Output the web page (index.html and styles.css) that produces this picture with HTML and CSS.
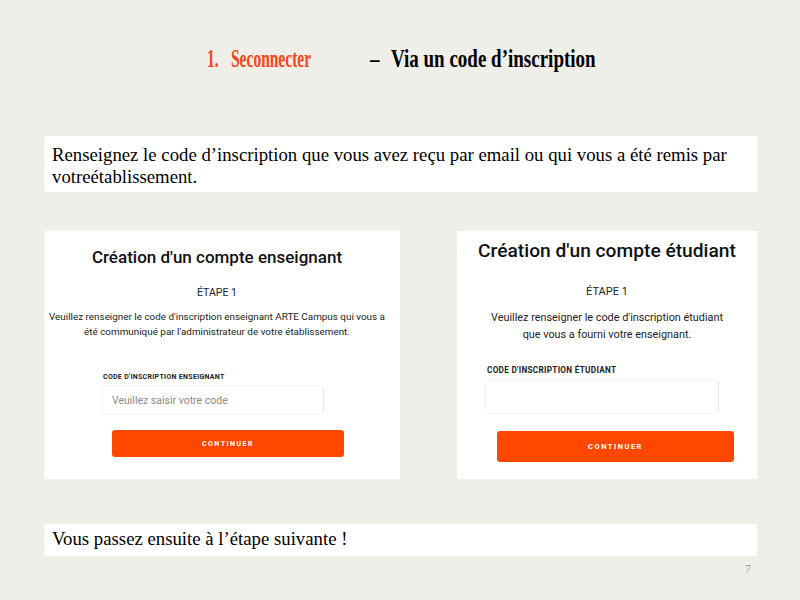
FILE: index.html
```html
<!DOCTYPE html>
<html lang="fr">
<head>
  <meta charset="UTF-8" />
  <meta name="viewport" content="width=device-width, initial-scale=1" />
  <title>Se connecter - Via un code d'inscription</title>
  <link rel="stylesheet" href="styles.css">
</head>
<body>

  <div class="slide">

    <!-- Titre de la diapositive -->
    <h1 class="slide-title">
      <span class="t-num"><span class="squeeze-a">1.</span></span>
      <span class="t-orange"><span class="squeeze-a">Seconnecter</span></span>
      <span class="t-dash"><span class="squeeze-b">–</span></span>
      <span class="t-black"><span class="squeeze-b">Via un code d’inscription</span></span>
    </h1>

    <div class="note note-top">
      Renseignez le code d’inscription que vous avez reçu par email ou qui vous a été remis par
      votreétablissement.
    </div>

    <!-- Captures des deux formulaires -->
    <div class="cards">

      <div class="card card-teacher">
        <h2>Création d'un compte enseignant</h2>
        <div class="step">ÉTAPE 1</div>
        <p>Veuillez renseigner le code d'inscription enseignant ARTE Campus qui vous a<br>
          été communiqué par l'administrateur de votre établissement.</p>
        <label for="codeTeacher">CODE D'INSCRIPTION ENSEIGNANT</label>
        <input type="text" id="codeTeacher" placeholder="Veuillez saisir votre code" />
        <button type="button">CONTINUER</button>
      </div>

      <div class="card card-student">
        <h2>Création d'un compte étudiant</h2>
        <div class="step">ÉTAPE 1</div>
        <p>Veuillez renseigner le code d'inscription étudiant<br>que vous a fourni votre enseignant.</p>
        <label for="codeStudent">CODE D'INSCRIPTION ÉTUDIANT</label>
        <input type="text" id="codeStudent" />
        <button type="button">CONTINUER</button>
      </div>

    </div>

    <div class="note note-bottom">Vous passez ensuite à l’étape suivante !</div>

    <div class="page-num">7</div>
  </div>

</body>
</html>
```

FILE: styles.css
```css
body {
  margin: 0;
  background: #efeee9;
  font-family: "Liberation Serif", "Times New Roman", serif;
  color: #000;
}

.slide {
  width: 800px;
  height: 600px;
  padding: 0 43px 0 44px;
  box-sizing: border-box;
}

/* titre */
.slide-title {
  display: flex;
  align-items: baseline;
  margin: 0;
  padding: 44px 0 0 163px;
  height: 136px;
  box-sizing: border-box;
  font-size: 25px;
  line-height: 30px;
  font-weight: bold;
  white-space: nowrap;
}

.squeeze-a,
.squeeze-b {
  display: inline-block;
  transform-origin: left center;
}

.squeeze-a {
  transform: scaleX(0.62);
}

.squeeze-b {
  transform: scaleX(0.76);
}

.t-num {
  width: 24px;
  color: #f5461a;
}

.t-orange {
  width: 139px;
  color: #f5461a;
}

.t-dash {
  width: 21px;
}

.note {
  background: #fff;
  font-size: 18.75px;
  line-height: 22px;
  padding: 8px 8px 4px;
}

.note-top {
  height: 56px;
  box-sizing: border-box;
}

.cards {
  display: flex;
  justify-content: space-between;
  margin-top: 39px;
  height: 248px;
}

.card {
  background: #fff;
  font-family: Roboto, "Liberation Sans", sans-serif;
  color: #111;
  display: flex;
  flex-direction: column;
  box-sizing: border-box;
}

.card h2 {
  margin: 0;
  font-weight: 500;
  text-align: center;
}

.card .step {
  text-align: center;
  color: #222;
}

.card p {
  margin: 0;
  text-align: center;
  color: #222;
}

.card label {
  font-weight: bold;
  color: #222;
  letter-spacing: 0.3px;
}

.card input {
  border: 1px solid #f4f4f4;
  border-right-color: #e8e8e8;
  border-radius: 3px;
  background: #fff;
  font-family: Roboto, "Liberation Sans", sans-serif;
  color: #222;
  box-sizing: border-box;
  outline: none;
}

.card input::placeholder {
  color: #8a8a8a;
}

.card button {
  background: #ff4700;
  color: #fff;
  border: none;
  border-radius: 3px;
  font-family: Roboto, "Liberation Sans", sans-serif;
  font-weight: bold;
  letter-spacing: 1.5px;
  padding: 0;
}

/* formulaire enseignant */
.card-teacher {
  width: 356px;
  padding: 15px 10px 0 0;
}

.card-teacher h2 {
  font-size: 17px;
  line-height: 22px;
}

.card-teacher .step {
  margin-top: 18px;
  font-size: 10.5px;
  line-height: 14px;
}

.card-teacher p {
  margin-top: 9px;
  font-size: 9.9px;
  line-height: 15px;
}

.card-teacher label {
  margin: 33px 0 0 59px;
  font-size: 7px;
  line-height: 10px;
}

.card-teacher input {
  margin: 3px 0 0 58px;
  width: 222px;
  height: 30px;
  padding: 0 9px;
  font-size: 10.5px;
}

.card-teacher button {
  margin: 15px 0 0 68px;
  width: 232px;
  height: 27px;
  font-size: 7px;
}

/* formulaire étudiant */
.card-student {
  width: 300px;
  padding: 8px 0 0 0;
}

.card-student h2 {
  font-size: 19.2px;
  line-height: 24px;
}

.card-student .step {
  margin-top: 22px;
  font-size: 11px;
  line-height: 14px;
}

.card-student p {
  margin-top: 10px;
  font-size: 10.85px;
  line-height: 17px;
}

.card-student label {
  margin: 22px 0 0 30px;
  font-size: 8.2px;
  line-height: 10px;
}

.card-student input {
  margin: 4px 0 0 28px;
  width: 234px;
  height: 35px;
}

.card-student button {
  margin: 17px 0 0 40px;
  width: 237px;
  height: 31px;
  font-size: 7.5px;
}

.cards + .note {
  margin-top: 45px;
}

.note-bottom {
  height: 32px;
  box-sizing: border-box;
  padding: 4px 8px;
}

.page-num {
  text-align: right;
  padding-right: 6px;
  margin-top: 6px;
  font-size: 12px;
  color: #a3a3a3;
}
```
